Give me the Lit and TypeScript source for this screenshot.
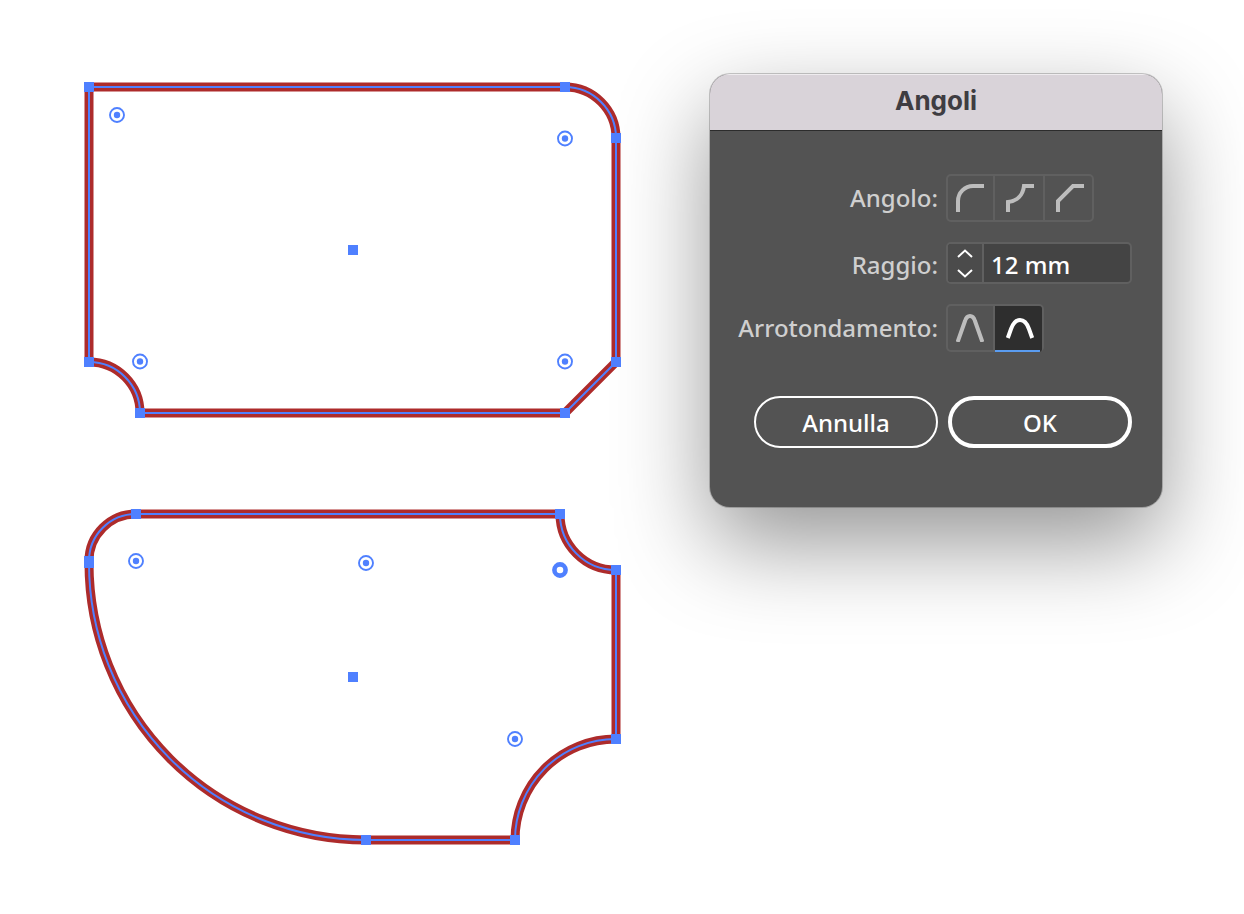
import { LitElement, html, css, svg } from "lit";
import { customElement, state } from "lit/decorators.js";

type Point = [number, number];

interface Shape {
  outline: string;
  anchors: Point[];
  widgets: Point[];
  active: Point[];
}

const shapes: Shape[] = [
  {
    outline:
      "M89 87H565A51 51 0 0 1 616 138V362L565 413H140A51 51 0 0 0 89 362Z",
    anchors: [
      [89, 87], [565, 87], [616, 138], [616, 362],
      [565, 413], [140, 413], [89, 362], [353, 250],
    ],
    widgets: [[117, 115], [565, 138.5], [140, 361.5], [565, 361.5]],
    active: [],
  },
  {
    outline:
      "M136 514H560A56 56 0 0 0 616 570V739A101 101 0 0 0 515 840H366A277 277 0 0 1 89 563V561A47 47 0 0 1 136 514Z",
    anchors: [
      [136, 514], [560, 514], [616, 570], [616, 739],
      [515, 840], [366, 840], [89, 561], [89, 563], [353, 677],
    ],
    widgets: [[136, 561], [366, 563], [515, 739]],
    active: [[560, 570]],
  },
];

@customElement("corner-artboard")
export class CornerArtboard extends LitElement {
  static styles = css`
    :host { display: block; }
    .board { display: block; width: 100%; height: auto; overflow: visible; }
    .stroke { fill: none; stroke: #ad2b2b; stroke-width: 9; }
    .guide { fill: none; stroke: #4f80ff; stroke-width: 2; }
    .anchor { fill: #4f80ff; }
    .ring { fill: #fff; stroke: #4f80ff; stroke-width: 1.9; }
    .ring-active { fill: #fff; stroke: #4f80ff; stroke-width: 4.6; }
  `;

  render() {
    return html`
      <svg class="board" viewBox="80 74 550 776" role="img" aria-label="Tracciati">
        ${shapes.map(
          (s) => svg`
            <path class="stroke" d=${s.outline}></path>
            <path class="guide" d=${s.outline}></path>
            ${s.anchors.map(
              ([x, y]) => svg`<rect class="anchor" x=${x - 5} y=${y - 5} width="10" height="10"></rect>`
            )}
            ${s.widgets.map(
              ([x, y]) => svg`
                <circle class="ring" cx=${x} cy=${y} r="7"></circle>
                <circle class="anchor" cx=${x} cy=${y} r="3.2"></circle>`
            )}
            ${s.active.map(
              ([x, y]) => svg`<circle class="ring-active" cx=${x} cy=${y} r="5.6"></circle>`
            )}`
        )}
      </svg>
    `;
  }
}

const cornerKinds = [
  { id: "round", name: "Arrotondato", d: "M12 38V27A15 15 0 0 1 27 12H38" },
  { id: "inverted", name: "Arrotondato invertito", d: "M12 38V28C21 27 27 21 28 12H38" },
  { id: "chamfer", name: "Smussato", d: "M12 38V27L27 12H38" },
];

const roundings = [
  { id: "absolute", name: "Assoluto", d: "M11.6 38L19 17Q20.6 12 24 12T29 17L36.4 38" },
  { id: "relative", name: "Relativo", d: "M11.8 34L15 25C17.2 18.6 19.6 16 24 16S30.8 18.6 33 25L36.2 34" },
];

@customElement("corners-dialog")
export class CornersDialog extends LitElement {
  @state() private kind = "";
  @state() private rounding = "relative";
  @state() private radius = 12;

  static styles = css`
    :host {
      display: block;
      font-family: "Noto Sans", sans-serif;
      font-size: 24px;
      line-height: 32px;
      font-weight: 500;
    }
    .window {
      border-radius: 20px;
      background: #535353;
      box-shadow: 0 0 0 1px rgba(0, 0, 0, 0.2), 0 36px 92px rgba(0, 0, 0, 0.42);
      overflow: hidden;
    }
    .title {
      margin: 0;
      padding: 11px 0 13px;
      border-bottom: 1px solid #2c2c2c;
      background: #d9d3d9;
      box-shadow: inset 0 2px 0 -1px #efecef;
      color: #3f3d42;
      font-family: Inter, sans-serif;
      font-size: 26px;
      line-height: 32px;
      font-weight: 700;
      text-align: center;
    }
    .form { padding: 43px 30px 59px 20px; }
    .rows {
      display: grid;
      grid-template-columns: 1fr 186px;
      gap: 20px 8px;
      align-items: center;
    }
    .label { color: #cfcfcf; text-align: right; }
    .lowered { padding-top: 4px; }
    .segments {
      display: grid;
      box-sizing: border-box;
      width: max-content;
      height: 48px;
      border: 2px solid #606060;
      border-radius: 5px;
    }
    .three { grid-template-columns: 47px 50px 47px; }
    .two { grid-template-columns: 47px 47px; }
    .segment {
      position: relative;
      display: block;
      box-sizing: border-box;
      padding: 8px 0 0 11px;
      border-right: 2px solid #606060;
      color: #bdbdbd;
    }
    .segment:first-child { padding-left: 8px; }
    .segment:last-child { border-right: 0; }
    .segment.on {
      background: linear-gradient(#5a9cf0, #5a9cf0) left bottom / 45px 2px no-repeat, #2e2e2e;
      margin-bottom: -2px;
      color: #fff;
      border-radius: 0 3px 3px 0;
    }
    .radio {
      position: absolute;
      inset: 0;
      margin: 0;
      width: 100%;
      height: 100%;
      appearance: none;
      cursor: pointer;
    }
    .glyph {
      display: block;
      width: 28px;
      height: 28px;
      fill: none;
      stroke: currentColor;
      stroke-width: 4;
    }
    .stepper {
      display: grid;
      grid-template-columns: 36px 1fr;
      box-sizing: border-box;
      height: 42px;
      border: 2px solid #606060;
      border-radius: 5px;
      background: #444;
      overflow: hidden;
    }
    .arrows {
      display: grid;
      grid-template-rows: 1fr 1fr;
      box-sizing: border-box;
      background: #4b4b4b;
      border-right: 2px solid #606060;
    }
    .arrow {
      display: grid;
      place-items: center;
      padding: 0;
      border: 0;
      background: none;
    }
    .chevron { display: block; width: 18px; height: 10px; fill: none; stroke: #fff; stroke-width: 2; }
    .field {
      box-sizing: border-box;
      width: 100%;
      min-width: 0;
      padding: 4px 7px 0;
      border: 0;
      outline: 0;
      background: none;
      color: #fff;
      font: inherit;
    }
    .actions {
      display: flex;
      justify-content: flex-end;
      gap: 10px;
      margin-top: 44px;
    }
    .action {
      box-sizing: border-box;
      width: 184px;
      height: 52px;
      padding: 2px 0 0;
      border: 2px solid #fff;
      border-radius: 26px;
      background: none;
      color: #fff;
      font: inherit;
    }
    .primary { border-width: 4px; }
  `;

  private segment(
    group: string,
    item: { id: string; name: string; d: string },
    selected: string,
    pick: (id: string) => void
  ) {
    return html`
      <label class="segment ${item.id === selected ? "on" : ""}">
        <svg class="glyph" viewBox="10 10 28 28" aria-hidden="true"><path d=${item.d}></path></svg>
        <input class="radio" type="radio" name=${group} aria-label=${item.name}
          .checked=${item.id === selected} @change=${() => pick(item.id)} />
      </label>
    `;
  }

  render() {
    return html`
      <section class="window" role="dialog" aria-labelledby="title">
        <h1 class="title" id="title">Angoli</h1>
        <form class="form" @submit=${(e: Event) => e.preventDefault()}>
          <div class="rows">
            <span class="label" id="kind">Angolo:</span>
            <div class="segments three" role="radiogroup" aria-labelledby="kind">
              ${cornerKinds.map((k) => this.segment("kind", k, this.kind, (id) => (this.kind = id)))}
            </div>
            <label class="label lowered" for="radius">Raggio:</label>
            <div class="stepper">
              <div class="arrows">
                <button class="arrow" type="button" aria-label="Aumenta" @click=${() => this.radius++}>
                  <svg class="chevron" viewBox="0 0 18 10"><path d="M2 8L9 1.5L16 8"></path></svg>
                </button>
                <button class="arrow" type="button" aria-label="Riduci" @click=${() => this.radius--}>
                  <svg class="chevron" viewBox="0 0 18 10"><path d="M2 2L9 8.5L16 2"></path></svg>
                </button>
              </div>
              <input class="field" id="radius" type="text" .value=${`${this.radius} mm`} />
            </div>
            <span class="label" id="rounding">Arrotondamento:</span>
            <div class="segments two" role="radiogroup" aria-labelledby="rounding">
              ${roundings.map((r) => this.segment("rounding", r, this.rounding, (id) => (this.rounding = id)))}
            </div>
          </div>
          <div class="actions">
            <button class="action" type="button">Annulla</button>
            <button class="action primary" type="submit">OK</button>
          </div>
        </form>
      </section>
    `;
  }
}

@customElement("app-root")
export class AppRoot extends LitElement {
  static styles = css`
    :host { display: block; min-height: 100vh; background: #fff; overflow: hidden; }
    .stage {
      display: flex;
      align-items: flex-start;
      gap: 80px;
      padding: 74px 82px 64px 80px;
    }
    .art { flex: 0 1 550px; min-width: 0; }
    .panel { flex: 0 0 452px; }
  `;

  render() {
    return html`
      <main class="stage">
        <corner-artboard class="art"></corner-artboard>
        <corners-dialog class="panel"></corners-dialog>
      </main>
    `;
  }
}
